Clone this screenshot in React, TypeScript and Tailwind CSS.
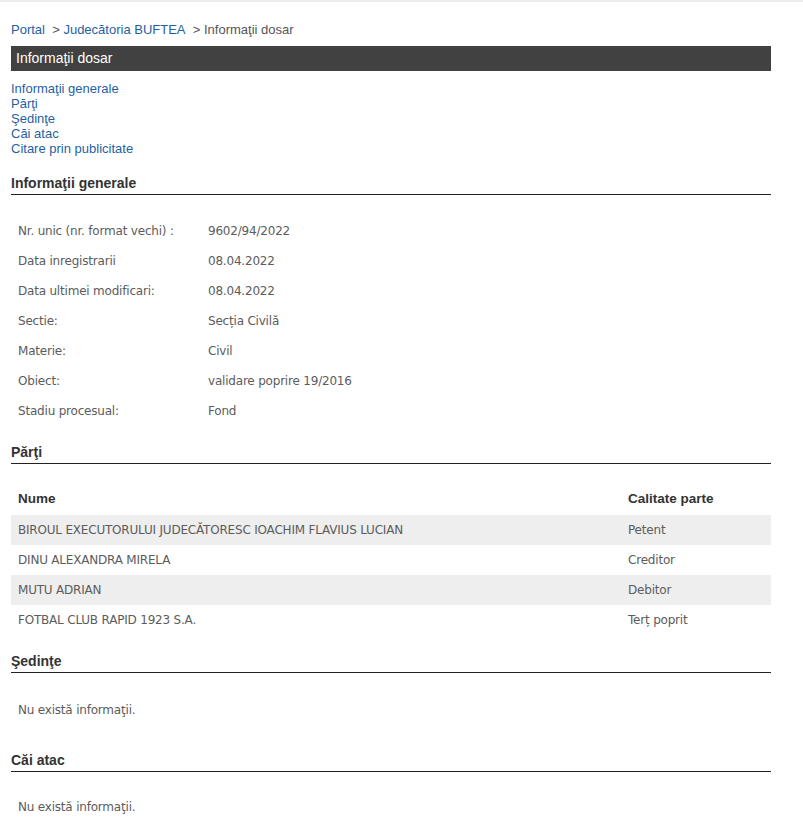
import React from "react";

const arial = { fontFamily: '"Liberation Sans", Arial, sans-serif' };

function SectionHeading({ children }: { children: React.ReactNode }) {
  return (
    <div className="border-b border-[#222] pb-[3px] text-[14px] font-bold leading-[16px] text-[#333]" style={arial}>
      {children}
    </div>
  );
}

const info: [string, string][] = [
  ["Nr. unic (nr. format vechi) :", "9602/94/2022"],
  ["Data inregistrarii", "08.04.2022"],
  ["Data ultimei modificari:", "08.04.2022"],
  ["Sectie:", "Secția Civilă"],
  ["Materie:", "Civil"],
  ["Obiect:", "validare poprire 19/2016"],
  ["Stadiu procesual:", "Fond"],
];

const parti: [string, string][] = [
  ["BIROUL EXECUTORULUI JUDECĂTORESC IOACHIM FLAVIUS LUCIAN", "Petent"],
  ["DINU ALEXANDRA MIRELA", "Creditor"],
  ["MUTU ADRIAN", "Debitor"],
  ["FOTBAL CLUB RAPID 1923 S.A.", "Terț poprit"],
];

export default function App() {
  const body = { fontFamily: '"DejaVu Sans", Tahoma, sans-serif' };
  return (
    <div className="min-h-[825px] w-[803px] border-t-2 border-[#ececec] bg-white">
      <div className="w-[760px] ml-[11px]">
        <div className="pt-[20px] text-[13px] leading-[16px]" style={arial}>
          <span className="text-[#1f5fa5]">Portal</span>
          <span className="text-[#555]">&nbsp; &gt; </span>
          <span className="text-[#1f5fa5]">Judecătoria BUFTEA</span>
          <span className="text-[#555]">&nbsp; &gt; Informaţii dosar</span>
        </div>
        <div className="mt-[8px] h-[25px] bg-[#414141] pl-[5px] text-[14px] leading-[25px] text-white" style={arial}>
          Informaţii dosar
        </div>
        <div className="mt-[10px] flex flex-col text-[13px] leading-[15px] text-[#1f5fa5]" style={arial}>
          <span>Informaţii generale</span>
          <span>Părţi</span>
          <span>Şedinţe</span>
          <span>Căi atac</span>
          <span>Citare prin publicitate</span>
        </div>

        <div className="mt-[19px]">
          <SectionHeading>Informaţii generale</SectionHeading>
        </div>
        <div className="mt-[21px] text-[12px] text-[#5c5c5c]" style={body}>
          {info.map(([k, v]) => (
            <div key={k} className="flex h-[30px] items-center">
              <span className="w-[197px] pl-[7px] tracking-[-0.2px]">{k}</span>
              <span className="tracking-[-0.2px]">{v}</span>
            </div>
          ))}
        </div>

        <div className="mt-[18px]">
          <SectionHeading>Părţi</SectionHeading>
        </div>
        <div className="mt-[20px]">
          <div className="flex h-[31px] items-center text-[13.5px] font-bold text-[#333]" style={arial}>
            <span className="flex-1 pl-[7px]">Nume</span>
            <span className="w-[143px]">Calitate parte</span>
          </div>
          {parti.map(([n, c], i) => (
            <div
              key={n}
              className={`flex h-[30px] items-center text-[12px] text-[#5c5c5c] ${i % 2 === 0 ? "bg-[#eeeeee]" : "bg-white"}`}
              style={body}
            >
              <span className="flex-1 pl-[7px] tracking-[-0.2px]">{n}</span>
              <span className="w-[143px] tracking-[-0.2px]">{c}</span>
            </div>
          ))}
        </div>

        <div className="mt-[18px]">
          <SectionHeading>Şedinţe</SectionHeading>
        </div>
        <div className="mt-[29px] pl-[7px] text-[12px] leading-[16px] tracking-[-0.2px] text-[#5c5c5c]" style={body}>
          Nu există informaţii.
        </div>

        <div className="mt-[34px]">
          <SectionHeading>Căi atac</SectionHeading>
        </div>
        <div className="mt-[27px] pl-[7px] text-[12px] leading-[16px] tracking-[-0.2px] text-[#5c5c5c]" style={body}>
          Nu există informaţii.
        </div>
      </div>
    </div>
  );
}
